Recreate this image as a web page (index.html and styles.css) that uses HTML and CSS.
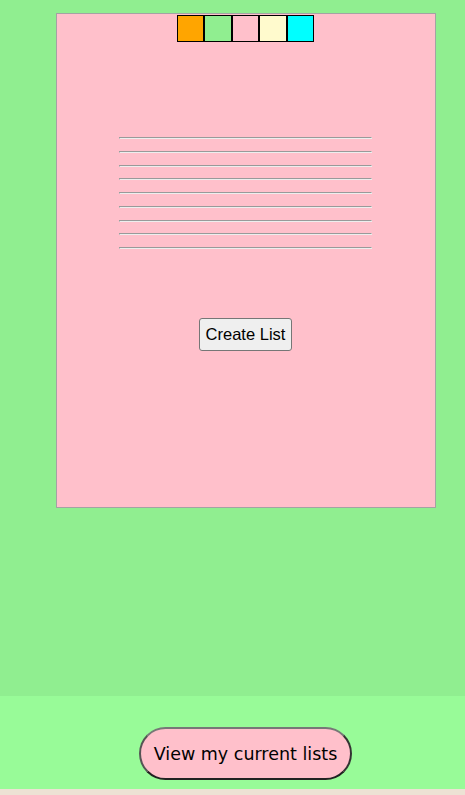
FILE: index.html
```html
<!DOCTYPE html>
<html>
<head>
<meta charset="utf-8">
<link rel="stylesheet" href="styles.css">
</head>
<body>
<main class="stage">
  <section class="card">
    <div class="swatches">
      <span class="swatch orange"></span>
      <span class="swatch green"></span>
      <span class="swatch pink"></span>
      <span class="swatch lemon"></span>
      <span class="swatch cyan"></span>
    </div>
    <div class="lines">
      <div class="line"></div>
      <div class="line"></div>
      <div class="line"></div>
      <div class="line"></div>
      <div class="line"></div>
      <div class="line"></div>
      <div class="line"></div>
      <div class="line"></div>
      <div class="line"></div>
    </div>
    <button class="create">Create List</button>
  </section>
</main>
<footer class="bar">
  <button class="view">View my current lists</button>
</footer>
</body>
</html>
```
FILE: styles.css
```css
html {
  background: #ede2d4;
}
body {
  margin: 0;
  height: 795px;
}
.stage {
  height: 696px;
  box-sizing: border-box;
  padding: 13px 0 0 26px;
  background: #90ee90;
}
.card {
  width: 378px;
  height: 493px;
  margin: 0 auto;
  border: 1px solid #a3a3a3;
  background: #ffc0cb;
  display: flex;
  flex-direction: column;
  align-items: center;
}
.swatches {
  display: flex;
  margin-top: 1px;
}
.swatch {
  width: 25.4px;
  height: 25px;
  border: 1px solid #000;
}
.orange { background: #ffa500; }
.green { background: #90ee90; }
.pink { background: #ffc0cb; }
.lemon { background: #fffacd; }
.cyan { background: #00ffff; }
.lines {
  display: flex;
  flex-direction: column;
  gap: 11.75px;
  margin-top: 95px;
}
.line {
  width: 251px;
  height: 0;
  border-style: solid;
  border-width: 1px;
  border-color: #9a9a9a #eeeeee #eeeeee #9a9a9a;
}
.create {
  margin-top: 69px;
  font-family: "Liberation Sans", Arial, sans-serif;
  font-size: 16.5px;
  padding: 6px 6px;
  background: #efefef;
  color: #000;
  border: 1px solid #767676;
  border-radius: 3px;
}
.bar {
  height: 93px;
  box-sizing: border-box;
  padding: 31px 0 0 26px;
  background: #98fb98;
  display: flex;
  justify-content: center;
  align-items: flex-start;
}
.view {
  width: 213px;
  height: 53px;
  background: #ffc0cb;
  color: #000;
  border: 2px solid;
  border-color: #777777 #333333 #222222 #555555;
  border-radius: 27px;
  font-family: "DejaVu Sans", sans-serif;
  font-size: 17.5px;
  padding: 0;
}
```
